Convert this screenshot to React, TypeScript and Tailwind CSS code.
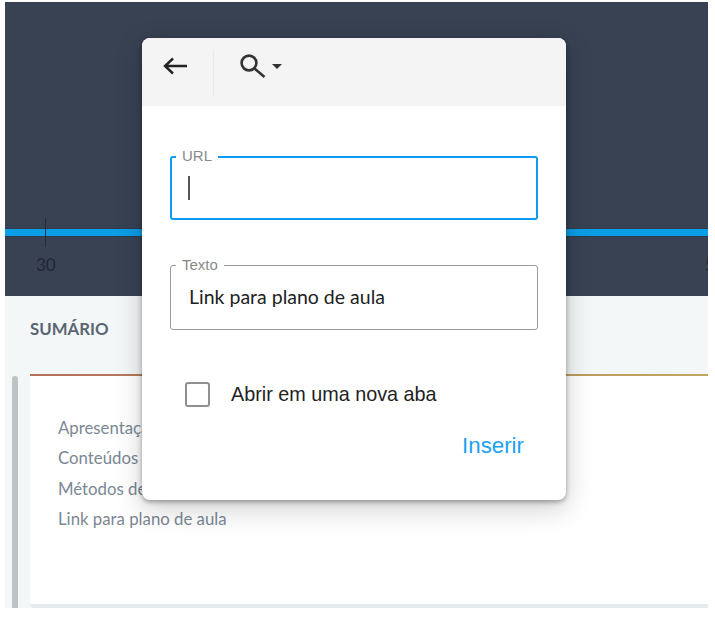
const topics = ["Apresentação", "Conteúdos", "Métodos de avaliação", "Link para plano de aula"];

const App = () => {
  return (
    <div className="relative h-[630px] w-[715px] overflow-hidden bg-white pl-[5px] pr-[7px] pt-[2px] font-['Lato',sans-serif]">
      {/* Timeline header */}
      <div className="relative h-[294px] overflow-hidden bg-[#384253]">
        <div className="absolute inset-x-0 top-[226px] h-[9px] border-y border-[#2f3a4b] bg-[#0a9ee6]" />
        <div className="absolute left-[40px] top-[216px] h-[29px] w-px bg-[#252c38]" />
        <span className="absolute left-[31px] top-[253px] text-[17px] leading-[20px] text-[#1f2632]">30</span>
        <span className="absolute left-[700px] top-[253px] text-[17px] leading-[20px] text-[#1f2632]">5</span>
      </div>

      {/* Summary */}
      <div className="flex h-[312px] flex-col bg-[#f4f7f8]">
        <h2 className="pl-[25px] pt-[22px] text-[16.8px] font-bold leading-[22px] text-[#5b6673]">SUMÁRIO</h2>
        <div className="mt-[34px] flex flex-1">
          <div className="ml-[7px] mt-[2px] w-[6px] rounded-t-[3px] bg-[#bfc3c5]" />
          <div className="ml-[12px] flex-1 rounded-bl-[4px] border-b-4 border-[#e6ebed] bg-white">
            <div className="h-[2px] bg-gradient-to-r from-[#b5705a] to-[#bfa75f]" />
            <ul className="flex flex-col gap-[8.3px] pl-[28px] pt-[41px] text-[16.8px] leading-[22px] text-[#7b8794]">
              {topics.map((topic) => (
                <li key={topic}>{topic}</li>
              ))}
            </ul>
          </div>
        </div>
      </div>

      {/* Link dialog */}
      <div className="absolute left-[142px] top-[38px] h-[462px] w-[424px] rounded-[8px] bg-white shadow-[0_2px_5px_rgba(0,0,0,0.35),0_8px_28px_rgba(0,0,0,0.2)]">
        <div className="flex h-[68px] items-center rounded-t-[8px] bg-[#f4f4f4] pl-[21px]">
          <svg className="mb-[12px]" width="24" height="18" viewBox="0 0 24 18" fill="none" stroke="#222" strokeWidth="2.4">
            <path d="M24 9H2M10 1.5L2 9l8 7.5" />
          </svg>
          <div className="ml-[26px] h-[45px] w-px bg-[#e9e9e9]" />
          <svg className="mb-[12px] ml-[26px]" width="26" height="24" viewBox="0 0 26 24" fill="none" stroke="#333" strokeWidth="2.6">
            <circle cx="9" cy="9" r="7.4" />
            <path d="M14.5 14.5L24.5 23" />
          </svg>
          <div className="mb-[11px] ml-[6px] h-0 w-0 border-x-[5px] border-t-[5px] border-x-transparent border-t-[#333]" />
        </div>

        <div className="px-[28px] font-['Liberation_Sans',sans-serif]">
          <div className="relative mt-[50px] flex h-[64px] items-center rounded-[3px] border-2 border-[#0d9bf2] pl-[16px]">
            <span className="absolute -top-[10px] left-[4px] bg-white px-[6px] text-[15px] leading-[16px] text-[#8a8a8a]">URL</span>
            <div className="h-[24px] w-[2px] bg-[#555]" />
          </div>

          <div className="relative mt-[45px] flex h-[65px] items-center rounded-[3px] border border-[#9a9a9a] pl-[18px]">
            <span className="absolute -top-[9px] left-[5px] bg-white px-[6px] text-[15px] leading-[16px] text-[#8a8a8a]">Texto</span>
            <span className="pb-[2px] font-['Lato',sans-serif] text-[19.5px] text-[#222]">Link para plano de aula</span>
          </div>

          <div className="mt-[51px] flex items-center pl-[15px]">
            <div className="h-[25px] w-[25px] rounded-[3px] border-2 border-[#8f8f8f]" />
            <span className="ml-[21px] text-[19.8px] leading-[26px] text-[#222]">Abrir em uma nova aba</span>
          </div>

          <div className="mt-[25px] flex justify-end pr-[14px]">
            <span className="text-[22.3px] leading-[28px] text-[#1c9ff5]">Inserir</span>
          </div>
        </div>
      </div>
    </div>
  );
};

export default App;
